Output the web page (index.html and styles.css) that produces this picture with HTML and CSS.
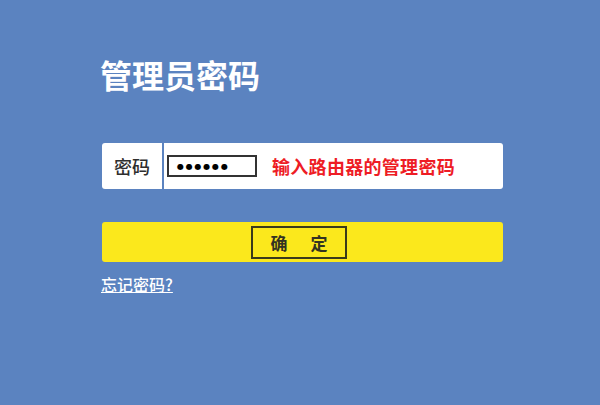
FILE: index.html
```html
<!DOCTYPE html>
<html lang="zh-CN">
<head>
<meta charset="utf-8">
<title>管理员密码</title>
<link rel="stylesheet" href="styles.css">
</head>
<body>
<main class="panel">
  <h1 class="title">管理员密码</h1>
  <div class="field">
    <label class="field-label">密码</label>
    <div class="field-body">
      <span class="pwd">●●●●●●</span>
      <span class="hint">输入路由器的管理密码</span>
    </div>
  </div>
  <div class="confirm">
    <span class="confirm-btn">确<span class="sp"></span>定</span>
  </div>
  <a class="forgot" href="#">忘记密码?</a>
</main>
</body>
</html>
```
FILE: styles.css
```css
html, body {
  margin: 0;
  padding: 0;
}
body {
  width: 600px;
  height: 405px;
  background: #5b83c0;
  font-family: "Noto Sans CJK SC", "Liberation Sans", sans-serif;
  overflow: hidden;
}
.panel {
  width: 401px;
  margin-left: 102px;
  padding-top: 54px;
  display: flex;
  flex-direction: column;
}
.title {
  margin: 0 0 0 -2px;
  font-size: 32px;
  line-height: 40px;
  font-weight: 700;
  color: #ffffff;
}
.field {
  margin-top: 49px;
  height: 46px;
  display: flex;
  background: #ffffff;
  border-radius: 3px;
}
.field-label {
  width: 60px;
  display: flex;
  align-items: center;
  justify-content: center;
  font-size: 18px;
  font-weight: 500;
  color: #2e2e2e;
  border-right: 2px solid #5b83c0;
}
.field-body {
  flex: 1;
  display: flex;
  align-items: center;
  padding-left: 3px;
}
.pwd {
  box-sizing: border-box;
  width: 90px;
  height: 22px;
  border: 2px solid #333333;
  display: flex;
  align-items: center;
  padding-left: 8px;
  font-size: 8px;
  letter-spacing: 1.8px;
  color: #000000;
  font-family: "DejaVu Sans", sans-serif;
}
.hint {
  margin-left: 15px;
  font-size: 18px;
  font-weight: 700;
  color: #ee1c25;
  letter-spacing: 0.3px;
}
.confirm {
  margin-top: 33px;
  height: 40px;
  background: #fbe81c;
  border-radius: 3px;
  display: flex;
  align-items: center;
  justify-content: center;
}
.confirm-btn {
  box-sizing: border-box;
  width: 96px;
  height: 33px;
  margin-right: 7px;
  border: 2px solid #3a3a1a;
  display: flex;
  align-items: center;
  justify-content: center;
  font-size: 17px;
  color: #333322;
  font-weight: 700;
}
.sp {
  display: inline-block;
  width: 23px;
}
.forgot {
  align-self: flex-start;
  margin-top: 10px;
  margin-left: -1px;
  font-size: 16px;
  font-weight: 500;
  color: #ffffff;
  text-decoration: underline;
}
```
